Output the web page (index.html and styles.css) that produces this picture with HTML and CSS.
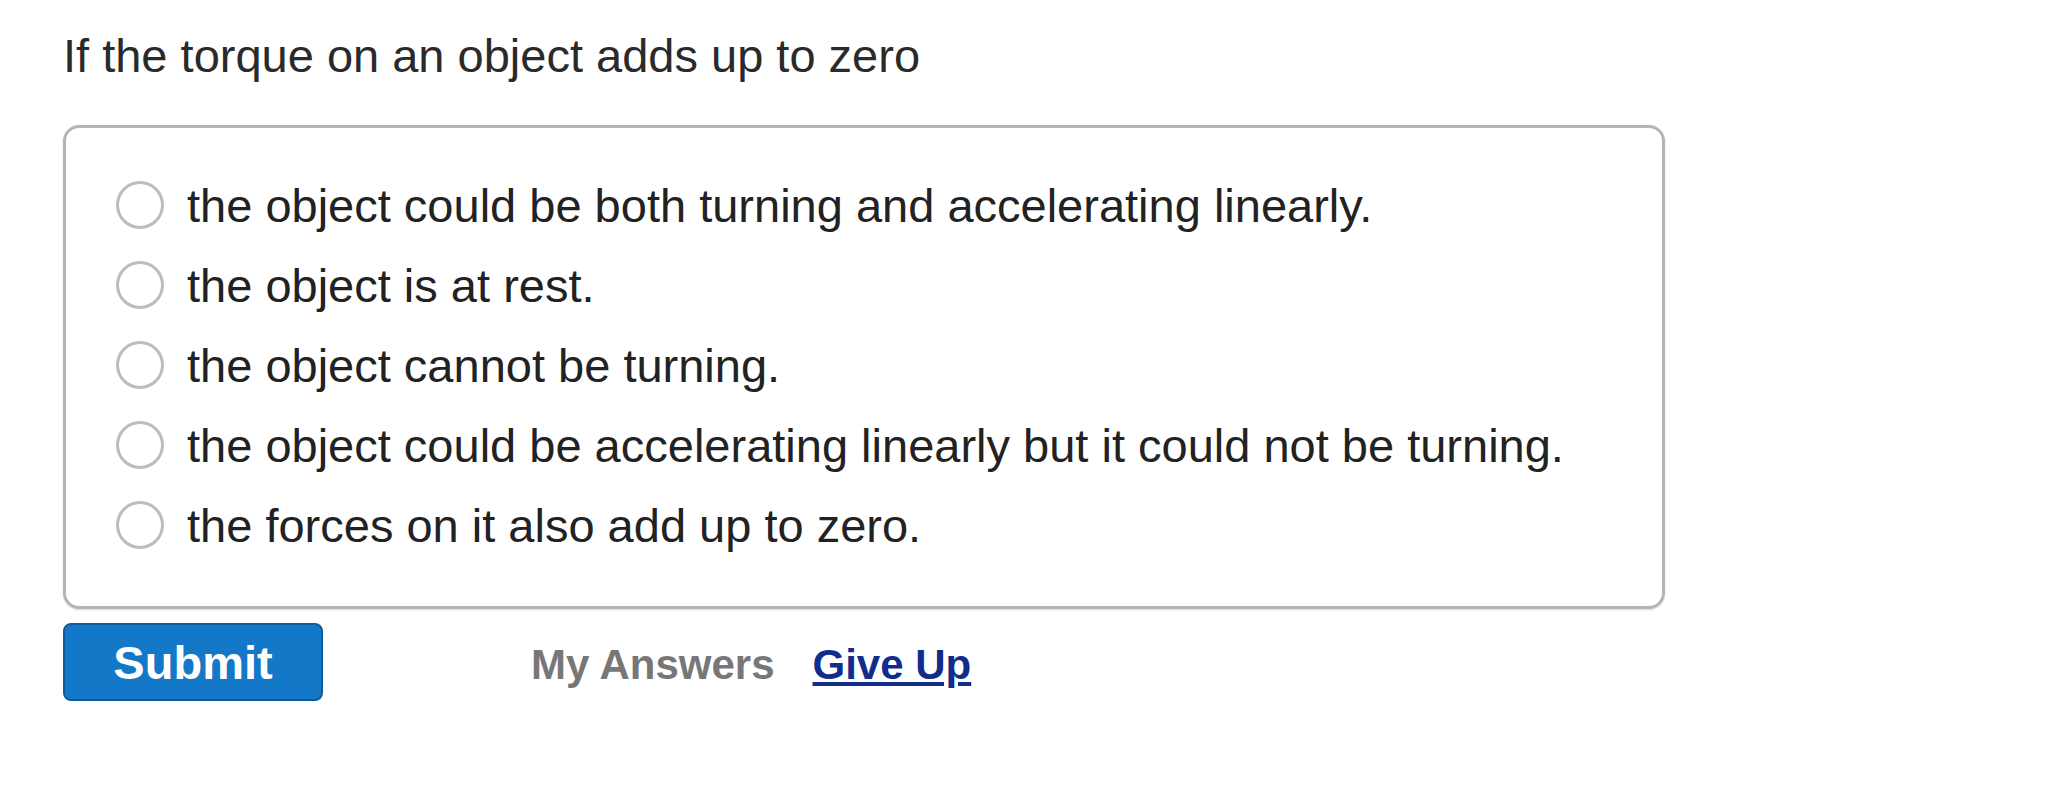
FILE: index.html
```html
<!DOCTYPE html>
<html lang="en">
<head>
<meta charset="UTF-8" />
<meta name="viewport" content="width=device-width, initial-scale=1" />
<title>Question</title>
<link rel="stylesheet" href="styles.css">
</head>
<body>

<div class="question">
  <p class="prompt">If the torque on an object adds up to zero</p>

  <div class="choices">
    <label class="choice"><input type="radio" name="answer" /> the object could be both turning and accelerating linearly.</label>
    <label class="choice"><input type="radio" name="answer" /> the object is at rest.</label>
    <label class="choice"><input type="radio" name="answer" /> the object cannot be turning.</label>
    <label class="choice"><input type="radio" name="answer" /> the object could be accelerating linearly but it could not be turning.</label>
    <label class="choice"><input type="radio" name="answer" /> the forces on it also add up to zero.</label>
  </div>

  <div class="actions">
    <button class="submit">Submit</button>
    <span class="my-answers">My Answers</span>
    <a class="give-up" href="#">Give Up</a>
  </div>
</div>

</body>
</html>
```

FILE: styles.css
```css
body {
  font-family: "Liberation Sans", Arial, Helvetica, sans-serif;
  margin: 0;
  padding: 29px 63px;
  color: #222;
  background: #fff;
}
.question {
  width: 1602px;
}
.prompt {
  margin: 0 0 42px;
  font-size: 47px;
  line-height: 54px;
  color: #2a2a2a;
}
.choices {
  border: 3px solid #b4b4b4;
  border-radius: 16px;
  padding: 37px 0 41px 50px;
  box-shadow: 0 1px 2px rgba(0, 0, 0, 0.15);
}
.choice {
  display: flex;
  align-items: center;
  height: 80px;
  font-size: 47px;
  cursor: pointer;
}
.choice input {
  appearance: none;
  -webkit-appearance: none;
  width: 48px;
  height: 48px;
  margin: 0 23px 0 0;
  border: 3px solid #bdbdbd;
  border-radius: 50%;
  background: #fff;
  box-sizing: border-box;
  flex: none;
}
.actions {
  display: flex;
  align-items: center;
  margin-top: 14px;
}
.submit {
  width: 260px;
  height: 78px;
  font-family: inherit;
  font-size: 47px;
  font-weight: bold;
  color: #fff;
  background-color: #1478c8;
  border: 2px solid #0e5c9e;
  border-radius: 8px;
  cursor: pointer;
}
.my-answers {
  margin: 6px 0 0 208px;
  font-size: 42px;
  font-weight: bold;
  color: #777;
}
.give-up {
  margin: 6px 0 0 38px;
  font-size: 42px;
  font-weight: bold;
  color: #102c8c;
  text-decoration: underline;
}
```
